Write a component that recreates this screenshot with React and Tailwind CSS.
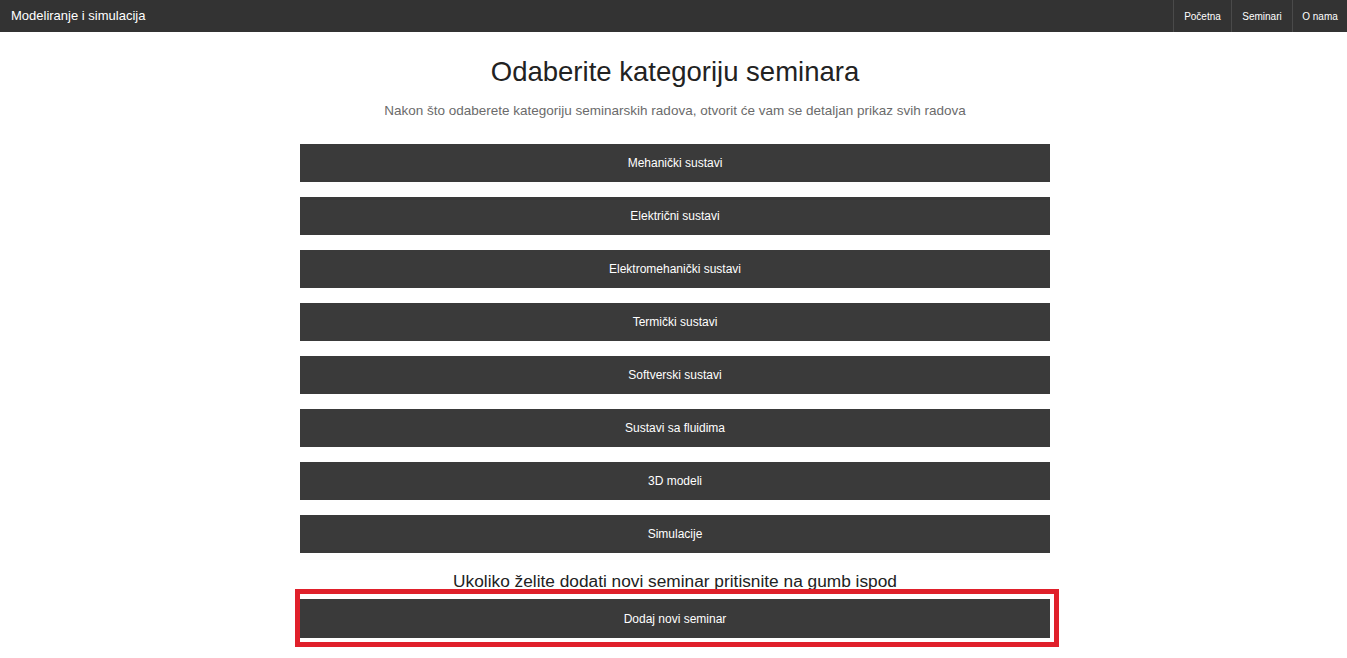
const categories = [
  'Mehanički sustavi',
  'Električni sustavi',
  'Elektromehanički sustavi',
  'Termički sustavi',
  'Softverski sustavi',
  'Sustavi sa fluidima',
  '3D modeli',
  'Simulacije',
];

const App = () => {
  return (
    <div className="min-h-screen bg-white font-['Liberation_Sans',Arial,sans-serif]">
      {/* Navbar */}
      <nav className="h-[32px] bg-[#333333] flex items-center justify-between">
        <span className="pl-[11px] text-[13px] text-white">Modeliranje i simulacija</span>
        <div className="flex h-full">
          <a className="h-full flex items-center justify-center w-[58px] border-l border-[#4a4a4a] text-[10px] text-white">Početna</a>
          <a className="h-full flex items-center justify-center w-[61px] border-l border-[#4a4a4a] text-[10px] text-white">Seminari</a>
          <a className="h-full flex items-center justify-center w-[55px] border-l border-[#4a4a4a] text-[10px] text-white">O nama</a>
        </div>
      </nav>

      <div className="flex justify-center pl-[3px]">
        <main className="w-[750px] flex flex-col items-center">
          <h1 className="mt-[22px] text-[27.5px] leading-[36px] text-[#222222]">Odaberite kategoriju seminara</h1>
          <p className="mt-[13px] text-[13.5px] leading-[16px] text-[#6b6b6b]">
            Nakon što odaberete kategoriju seminarskih radova, otvorit će vam se detaljan prikaz svih radova
          </p>

          <div className="mt-[25px] w-full flex flex-col gap-[15px]">
            {categories.map((c) => (
              <button key={c} className="w-full h-[38px] bg-[#3a3a3a] text-white text-[12px]">
                {c}
              </button>
            ))}
          </div>

          <p className="mt-[19px] text-[17.3px] leading-[18px] text-[#222222]">
            Ukoliko želite dodati novi seminar pritisnite na gumb ispod
          </p>

          {/* highlighted add button */}
          <div className="self-start -ml-[5px] -mt-px border-[5px] border-[#e0202b] pt-[5px] pb-[4px] pr-[4px]">
            <button className="w-[750px] h-[39px] bg-[#3a3a3a] text-white text-[12px]">Dodaj novi seminar</button>
          </div>
        </main>
      </div>
    </div>
  );
};

export default App;
